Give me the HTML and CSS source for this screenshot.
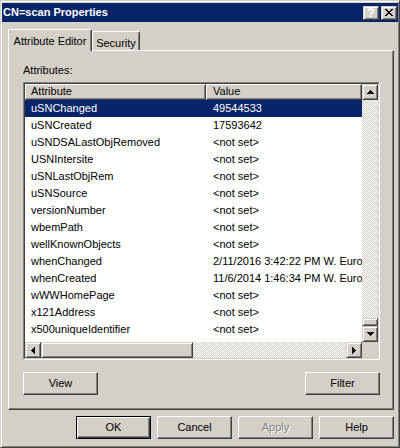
FILE: index.html
```html
<!DOCTYPE html>
<html>
<head>
    <meta charset="UTF-8">
    <link rel="stylesheet" href="styles.css">
</head>
<body>
    <div class="window">
        <div class="titlebar">
            <span class="caption">CN=scan Properties</span>
            <div class="caption-buttons">
                <button class="cap-btn">?</button>
                <button class="cap-btn">
                    <svg width="8" height="7" viewBox="0 0 8 7" shape-rendering="crispEdges">
                        <path d="M0 0h2v1h-2z M6 0h2v1h-2z M1 1h2v1h-2z M5 1h2v1h-2z M2 2h4v1h-4z M3 3h2v1h-2z M2 4h4v1h-4z M1 5h2v1h-2z M5 5h2v1h-2z M0 6h2v1h-2z M6 6h2v1h-2z" fill="#000"/>
                    </svg>
                </button>
            </div>
        </div>

        <div class="dialog">
            <div class="tabs">
                <div class="tab active">Attribute Editor</div>
                <div class="tab">Security</div>
            </div>

            <div class="panel">
                <div class="label">Attributes:</div>

                <div class="listview">
                    <div class="list-inner">
                        <div class="list-main">
                            <div class="list-header">
                                <div class="col-head col-attr">Attribute</div>
                                <div class="col-head col-value">Value</div>
                            </div>
                            <div class="list-body">
                                <div class="row selected"><div class="cell col-attr">uSNChanged</div><div class="cell col-value">49544533</div></div>
                                <div class="row"><div class="cell col-attr">uSNCreated</div><div class="cell col-value">17593642</div></div>
                                <div class="row"><div class="cell col-attr">uSNDSALastObjRemoved</div><div class="cell col-value">&lt;not set&gt;</div></div>
                                <div class="row"><div class="cell col-attr">USNIntersite</div><div class="cell col-value">&lt;not set&gt;</div></div>
                                <div class="row"><div class="cell col-attr">uSNLastObjRem</div><div class="cell col-value">&lt;not set&gt;</div></div>
                                <div class="row"><div class="cell col-attr">uSNSource</div><div class="cell col-value">&lt;not set&gt;</div></div>
                                <div class="row"><div class="cell col-attr">versionNumber</div><div class="cell col-value">&lt;not set&gt;</div></div>
                                <div class="row"><div class="cell col-attr">wbemPath</div><div class="cell col-value">&lt;not set&gt;</div></div>
                                <div class="row"><div class="cell col-attr">wellKnownObjects</div><div class="cell col-value">&lt;not set&gt;</div></div>
                                <div class="row"><div class="cell col-attr">whenChanged</div><div class="cell col-value">2/11/2016 3:42:22 PM W. Europe Standard Time</div></div>
                                <div class="row"><div class="cell col-attr">whenCreated</div><div class="cell col-value">11/6/2014 1:46:34 PM W. Europe Standard Time</div></div>
                                <div class="row"><div class="cell col-attr">wWWHomePage</div><div class="cell col-value">&lt;not set&gt;</div></div>
                                <div class="row"><div class="cell col-attr">x121Address</div><div class="cell col-value">&lt;not set&gt;</div></div>
                                <div class="row"><div class="cell col-attr">x500uniqueIdentifier</div><div class="cell col-value">&lt;not set&gt;</div></div>
                            </div>
                        </div>

                        <!-- vertical scrollbar -->
                        <div class="vscroll">
                            <div class="sb-btn">
                                <svg width="7" height="4" viewBox="0 0 7 4" shape-rendering="crispEdges"><path d="M3 0h1v1h-1z M2 1h3v1h-3z M1 2h5v1h-5z M0 3h7v1h-7z" fill="#000"/></svg>
                            </div>
                            <div class="sb-track"></div>
                            <div class="sb-thumb v"></div>
                            <div class="sb-btn">
                                <svg width="7" height="4" viewBox="0 0 7 4" shape-rendering="crispEdges"><path d="M0 0h7v1h-7z M1 1h5v1h-5z M2 2h3v1h-3z M3 3h1v1h-1z" fill="#000"/></svg>
                            </div>
                        </div>

                        <!-- horizontal scrollbar -->
                        <div class="hscroll">
                            <div class="sb-btn">
                                <svg width="4" height="7" viewBox="0 0 4 7" shape-rendering="crispEdges"><path d="M3 0h1v7h-1z M2 1h1v5h-1z M1 2h1v3h-1z M0 3h1v1h-1z" fill="#000"/></svg>
                            </div>
                            <div class="sb-thumb h"></div>
                            <div class="sb-track"></div>
                            <div class="sb-btn">
                                <svg width="4" height="7" viewBox="0 0 4 7" shape-rendering="crispEdges"><path d="M0 0h1v7h-1z M1 1h1v5h-1z M2 2h1v3h-1z M3 3h1v1h-1z" fill="#000"/></svg>
                            </div>
                        </div>

                        <div class="corner"></div>
                    </div>
                </div>

                <div class="panel-buttons">
                    <button class="btn">View</button>
                    <button class="btn">Filter</button>
                </div>
            </div>

            <div class="dialog-buttons">
                <button class="btn default">OK</button>
                <button class="btn">Cancel</button>
                <button class="btn" disabled>Apply</button>
                <button class="btn">Help</button>
            </div>
        </div>
    </div>
</body>
</html>
```

FILE: styles.css
```css
* {
    box-sizing: border-box;
}
body {
    margin: 0;
    background-color: #d4d0c8;
    font-family: "Liberation Sans", Arial, sans-serif;
    font-size: 11px;
    color: #000;
}
button {
    font: inherit;
    color: inherit;
    padding: 0;
    margin: 0;
    background-color: #d4d0c8;
}

/* window frame */
.window {
    width: 400px;
    height: 448px;
    background-color: #d4d0c8;
    border: 1px solid;
    border-color: #d4d0c8 #404040 #404040 #d4d0c8;
    box-shadow: inset 1px 1px #fff, inset -1px -1px #808080;
    padding: 2px 1px 0 1px;
}
.titlebar {
    height: 19px;
    background-color: #0a246a;
    color: #fff;
    display: flex;
    align-items: center;
    justify-content: space-between;
    padding-left: 1px;
}
.caption {
    font-weight: bold;
    line-height: 13px;
}
.caption-buttons {
    display: flex;
    gap: 2px;
    margin-right: 1px;
}
.cap-btn {
    width: 16px;
    height: 14px;
    display: flex;
    align-items: center;
    justify-content: center;
    font-weight: bold;
    font-size: 12px;
    line-height: 12px;
    border: 1px solid;
    border-color: #d4d0c8 #404040 #404040 #d4d0c8;
    box-shadow: inset 1px 1px #fff, inset -1px -1px #808080;
}

/* dialog body */
.dialog {
    padding: 7px 4px 0 6px;
}
.tabs {
    display: flex;
    align-items: flex-end;
    height: 21px;
}
.tab {
    height: 19px;
    text-align: center;
    line-height: 13px;
    padding-top: 5px;
    background-color: #d4d0c8;
    border-top: 1px solid #fff;
    border-left: 1px solid #fff;
    border-right: 1px solid #404040;
    box-shadow: inset -1px 0 #808080;
    border-radius: 2px 2px 0 0;
    width: 48px;
}
.tab.active {
    width: 84px;
    height: 22px;
    margin-bottom: -1px;
    position: relative;
    z-index: 1;
}
.panel {
    width: 386px;
    height: 360px;
    border: 1px solid;
    border-color: #fff #404040 #404040 #fff;
    box-shadow: inset -1px -1px #808080;
    padding: 13px 0 0 14px;
}
.label {
    line-height: 13px;
    margin-bottom: 5px;
}

/* list view */
.listview {
    width: 357px;
    height: 278px;
    border: 1px solid;
    border-color: #808080 #fff #fff #808080;
}
.list-inner {
    height: 100%;
    border: 1px solid;
    border-color: #404040 #d4d0c8 #d4d0c8 #404040;
    display: grid;
    grid-template-columns: 337px 16px;
    grid-template-rows: 258px 16px;
}
.list-main {
    background-color: #fff;
    overflow: hidden;
}
.list-header {
    display: flex;
    height: 16px;
    background-color: #d4d0c8;
}
.col-head {
    border: 1px solid;
    border-color: #fff #404040 #404040 #fff;
    box-shadow: inset -1px -1px #808080;
    line-height: 13px;
    white-space: nowrap;
}
.col-attr {
    width: 181px;
    flex: none;
    padding-left: 5px;
}
.col-value {
    flex: 1;
    padding-left: 6px;
}
.row {
    display: flex;
    height: 17px;
    line-height: 17px;
    white-space: nowrap;
}
.cell.col-attr {
    padding-left: 6px;
}
.cell.col-value {
    padding-left: 7px;
    overflow: hidden;
}
.row.selected {
    background-color: #0a246a;
    color: #fff;
}

/* scrollbars */
.vscroll {
    display: flex;
    flex-direction: column;
}
.hscroll {
    display: flex;
}
.sb-btn {
    width: 16px;
    height: 16px;
    flex: none;
    display: flex;
    align-items: center;
    justify-content: center;
    background-color: #d4d0c8;
    border: 1px solid;
    border-color: #d4d0c8 #404040 #404040 #d4d0c8;
    box-shadow: inset 1px 1px #fff, inset -1px -1px #808080;
}
.sb-track {
    flex: 1;
    background: repeating-conic-gradient(#fff 0 25%, #d4d0c8 0 50%) 0 0 / 2px 2px;
}
.sb-thumb {
    flex: none;
    background-color: #d4d0c8;
    border: 1px solid;
    border-color: #d4d0c8 #404040 #404040 #d4d0c8;
    box-shadow: inset 1px 1px #fff, inset -1px -1px #808080;
}
.sb-thumb.v {
    height: 8px;
}
.sb-thumb.h {
    width: 152px;
}
.corner {
    background-color: #d4d0c8;
}

/* push buttons */
.btn {
    width: 75px;
    height: 23px;
    line-height: 13px;
    text-align: center;
    border: 1px solid;
    border-color: #fff #404040 #404040 #fff;
    box-shadow: inset -1px -1px #808080;
}
.btn.default {
    border-color: #000;
    box-shadow: inset 1px 1px #fff, inset -1px -1px #404040, inset -2px -2px #808080;
}
.btn:disabled {
    color: #808080;
    text-shadow: 1px 1px #fff;
}
.panel-buttons {
    width: 357px;
    display: flex;
    justify-content: space-between;
    margin-top: 12px;
}
.dialog-buttons {
    width: 386px;
    display: flex;
    justify-content: flex-end;
    gap: 6px;
    margin-top: 6px;
}
```
